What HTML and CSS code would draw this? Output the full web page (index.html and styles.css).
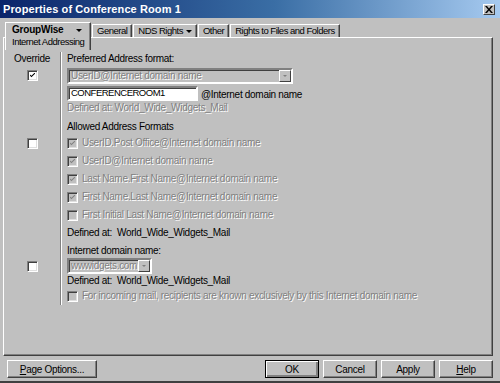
FILE: index.html
```html
<!DOCTYPE html>
<html lang="en">
<head>
    <meta charset="UTF-8">
    <title>Properties of Conference Room 1</title>
    <link rel="stylesheet" href="styles.css">
</head>
<body>
    <div class="window">
        <div class="titlebar">
            <span class="title">Properties of Conference Room 1</span>
            <span class="close">
                <svg width="8" height="7" viewBox="0 0 8 7"><path d="M0 0h2l2 2.5L6 0h2L5 3.5 8 7H6L4 4.5 2 7H0l3-3.5z" fill="#000"/></svg>
            </span>
        </div>

        <div class="tabs">
            <div class="tab active">
                <div class="tab-head"><b>GroupWise</b><span class="arrow"></span></div>
                <div>Internet Addressing</div>
            </div>
            <div class="tab">General</div>
            <div class="tab">NDS Rights <span class="arrow"></span></div>
            <div class="tab">Other</div>
            <div class="tab">Rights to Files and Folders</div>
        </div>

        <div class="panel">
            <div class="row h14">
                <div class="ov">Override</div>
                <div class="main">Preferred Address format:</div>
            </div>
            <div class="row h18">
                <div class="ov"><span class="check on"></span></div>
                <div class="main">
                    <div class="combo wide disabled"><span class="combo-text">UserID@Internet domain name</span><span class="combo-btn"></span></div>
                </div>
            </div>
            <div class="row h17">
                <div class="ov"></div>
                <div class="main">
                    <input class="field" type="text" value="CONFERENCEROOM1">
                    <span class="suffix">@Internet domain name</span>
                </div>
            </div>
            <div class="row h13">
                <div class="ov"></div>
                <div class="main dim">Defined at: World_Wide_Widgets_Mail</div>
            </div>
            <div class="row h20 bottom">
                <div class="ov"></div>
                <div class="main">Allowed Address Formats</div>
            </div>
            <div class="row h18">
                <div class="ov"><span class="check"></span></div>
                <div class="main"><span class="check gray on"></span><span class="dim">UserID.Post Office@Internet domain name</span></div>
            </div>
            <div class="row h18">
                <div class="ov"></div>
                <div class="main"><span class="check gray on"></span><span class="dim">UserID@Internet domain name</span></div>
            </div>
            <div class="row h18">
                <div class="ov"></div>
                <div class="main"><span class="check gray on"></span><span class="dim">Last Name.First Name@Internet domain name</span></div>
            </div>
            <div class="row h18">
                <div class="ov"></div>
                <div class="main"><span class="check gray on"></span><span class="dim">First Name.Last Name@Internet domain name</span></div>
            </div>
            <div class="row h18">
                <div class="ov"></div>
                <div class="main"><span class="check gray"></span><span class="dim">First Initial Last Name@Internet domain name</span></div>
            </div>
            <div class="row h18">
                <div class="ov"></div>
                <div class="main">Defined at:&nbsp; World_Wide_Widgets_Mail</div>
            </div>
            <div class="row h16 bottom">
                <div class="ov"></div>
                <div class="main">Internet domain name:</div>
            </div>
            <div class="row h16">
                <div class="ov"><span class="check"></span></div>
                <div class="main">
                    <div class="combo small disabled"><span class="combo-text">wwwidgets.com</span><span class="combo-btn"></span></div>
                </div>
            </div>
            <div class="row h13">
                <div class="ov"></div>
                <div class="main">Defined at:&nbsp; World_Wide_Widgets_Mail</div>
            </div>
            <div class="row h18">
                <div class="ov"></div>
                <div class="main"><span class="check gray"></span><span class="dim">For incoming mail, recipients are known exclusively by this Internet domain name</span></div>
            </div>
        </div>

        <div class="footer">
            <button class="btn wide-btn"><u>P</u>age Options...</button>
            <div class="btn-group">
                <button class="btn default">OK</button>
                <button class="btn">Cancel</button>
                <button class="btn">Apply</button>
                <button class="btn"><u>H</u>elp</button>
            </div>
        </div>
    </div>
</body>
</html>
```

FILE: styles.css
```css
body {
    margin: 0;
    padding: 0;
    background-color: #c0c0c0;
    font-family: "Liberation Sans", Arial, sans-serif;
    font-size: 10px;
    letter-spacing: -0.3px;
    color: #000;
}
.window {
    width: 500px;
    height: 381px;
    background-color: #c0c0c0;
    border-bottom: 2px solid #404040;
    overflow: hidden;
}
.titlebar {
    height: 18px;
    display: flex;
    align-items: center;
    justify-content: space-between;
    padding: 0 5px 0 3px;
    background: linear-gradient(to right, #0a246a, #3a6ea5 55%, #a6caf0);
}
.title {
    color: #fff;
    font-size: 11px;
    font-weight: bold;
    letter-spacing: 0.1px;
}
.close {
    width: 10px;
    height: 9px;
    display: flex;
    align-items: center;
    justify-content: center;
    background-color: #c0c0c0;
    border: 1px solid;
    border-color: #fff #404040 #404040 #fff;
}
.tabs {
    display: flex;
    align-items: flex-start;
    height: 15px;
    padding: 4px 0 0 5px;
    font-size: 9.5px;
    letter-spacing: -0.5px;
}
.tab {
    height: 12px;
    margin-top: 2px;
    padding: 0 4px;
    line-height: 12px;
    white-space: nowrap;
    border-top: 1px solid #fff;
    border-left: 1px solid #fff;
    border-right: 1px solid #404040;
    box-shadow: inset -1px 0 #808080;
    display: flex;
    align-items: center;
    gap: 3px;
    margin-left: 1px;
}
.tab.active {
    position: relative;
    z-index: 1;
    display: block;
    width: 76px;
    height: 26px;
    margin-top: 0;
    margin-left: 0;
    padding: 1px 2px 0 6px;
    background-color: #c0c0c0;
    line-height: 12px;
}
.tab-head {
    display: flex;
    align-items: center;
    justify-content: space-between;
    font-size: 10px;
    letter-spacing: -0.2px;
}
.arrow {
    width: 0;
    height: 0;
    border-left: 3px solid transparent;
    border-right: 3px solid transparent;
    border-top: 3px solid #000;
}
.tab-head .arrow {
    margin-right: 6px;
}
.panel {
    width: 488px;
    height: 303px;
    margin-left: 3px;
    padding-top: 14px;
    border: 1px solid;
    border-color: #fff #404040 #404040 #fff;
    box-shadow: inset -1px -1px #808080;
}
.row {
    display: flex;
}
.row.bottom {
    align-items: flex-end;
}
.h13 { height: 13px; }
.h14 { height: 14px; }
.h16 { height: 16px; }
.h17 { height: 17px; }
.h18 { height: 18px; }
.h20 { height: 20px; }
.ov {
    width: 56px;
    display: flex;
    align-items: center;
    justify-content: center;
    line-height: 14px;
}
.row.bottom .ov {
    align-self: stretch;
}
.main {
    flex: 1;
    display: flex;
    align-items: center;
    gap: 3px;
    padding-left: 6px;
    border-left: 1px solid #808080;
    box-shadow: inset 1px 0 #fff;
    line-height: 14px;
    white-space: nowrap;
}
.row.bottom .main {
    align-self: stretch;
    align-items: flex-end;
}
.dim {
    color: #808080;
    text-shadow: 1px 1px 0 #fff;
}
.check {
    position: relative;
    width: 9px;
    height: 9px;
    flex: none;
    background-color: #fff;
    border: 1px solid;
    border-color: #808080 #fff #fff #808080;
    box-shadow: inset 1px 1px #404040, inset -1px -1px #dfdfdf;
}
.check.gray {
    background-color: #c0c0c0;
    margin-right: 1px;
}
.check.on::after {
    content: "";
    position: absolute;
    left: 2px;
    top: 1px;
    width: 5px;
    height: 7px;
    background: no-repeat center / 5px 5px url("data:image/svg+xml,%3Csvg xmlns='http://www.w3.org/2000/svg' viewBox='0 0 7 7'%3E%3Cpath d='M0 2v2l2 2 5-5V-1L2 4z' fill='%23000'/%3E%3C/svg%3E");
}
.check.gray.on::after {
    background-image: url("data:image/svg+xml,%3Csvg xmlns='http://www.w3.org/2000/svg' viewBox='0 0 7 7'%3E%3Cpath d='M0 2v2l2 2 5-5V-1L2 4z' fill='%23808080'/%3E%3C/svg%3E");
}
.combo {
    height: 12px;
    display: flex;
    align-items: center;
    border: 2px solid;
    border-color: #808080 #fff #fff #808080;
    box-shadow: inset 1px 1px #404040;
    padding-left: 2px;
    margin-top: 1px;
}
.combo.wide { width: 220px; }
.combo.small { width: 79px; margin-top: 0; }
.combo-text {
    flex: 1;
    color: #808080;
    text-shadow: 1px 1px 0 #fff;
    line-height: 12px;
}
.combo-btn {
    width: 10px;
    height: 10px;
    display: flex;
    align-items: center;
    justify-content: center;
    border: 1px solid;
    border-color: #fff #404040 #404040 #fff;
    background-color: #c0c0c0;
}
.combo-btn::after {
    content: "";
    border-left: 2px solid transparent;
    border-right: 2px solid transparent;
    border-top: 2px solid #808080;
}
.field {
    width: 123px;
    height: 11px;
    margin: 1px 0 0 0;
    padding: 0 2px;
    font: inherit;
    font-size: 9.5px;
    letter-spacing: -0.5px;
    background-color: #fff;
    border: 2px solid;
    border-color: #808080 #fff #fff #808080;
    box-shadow: inset 1px 1px #404040;
    outline: none;
}
.suffix {
    margin-top: 4px;
}
.footer {
    display: flex;
    justify-content: space-between;
    padding: 4px 7px 0 7px;
}
.btn-group {
    display: flex;
    gap: 4px;
}
.btn {
    width: 54px;
    height: 18px;
    padding: 0;
    font: inherit;
    letter-spacing: inherit;
    color: #000;
    background-color: #c0c0c0;
    border: 1px solid;
    border-color: #fff #404040 #404040 #fff;
    box-shadow: inset -1px -1px #808080;
}
.btn.wide-btn {
    width: 90px;
}
.btn.default {
    border: 1px solid #000;
    box-shadow: inset 1px 1px #fff, inset -2px -2px #808080;
}
```
